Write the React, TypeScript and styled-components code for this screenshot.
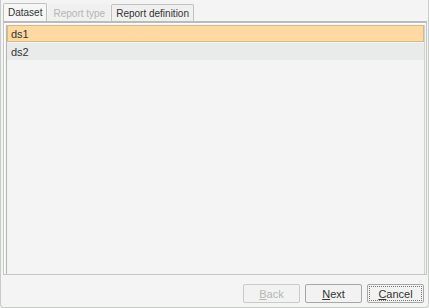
import styled, { createGlobalStyle } from "styled-components";

const GlobalStyle = createGlobalStyle`
  html, body {
    margin: 0;
    padding: 0;
    background: #f3f4f3;
  }
  body {
    font-family: "Liberation Sans", Arial, sans-serif;
    font-size: 10px;
    color: #333;
  }
`;

const Frame = styled.div`
  width: 429px;
  height: 308px;
  box-sizing: border-box;
  border: 1px solid #c9cbc9;
  border-top: none;
  border-radius: 0 0 4px 4px;
  background: #f3f4f3;
  display: flex;
  flex-direction: column;
  padding: 3px 1px 0 2px;
`;

const TabBar = styled.div`
  display: flex;
  align-items: flex-end;
  height: 18px;
`;

const Tab = styled.div<{ selected?: boolean; disabled?: boolean }>`
  box-sizing: border-box;
  height: ${({ selected }) => (selected ? "18px" : "17px")};
  padding: 0 4px;
  display: flex;
  align-items: center;
  border: 1px solid
    ${({ disabled }) => (disabled ? "transparent" : "#bfc2bf")};
  border-bottom: none;
  border-radius: 2px 2px 0 0;
  background: ${({ selected }) => (selected ? "#f6f7f6" : "#eff0ef")};
  color: ${({ disabled }) => (disabled ? "#b4b6b4" : "#333")};
  margin-right: 1px;
  white-space: nowrap;
`;

const Panel = styled.div`
  box-sizing: border-box;
  height: 254px;
  border: 1px solid #c3c6c3;
  border-top: 2px solid #b9bcb9;
  box-shadow: inset 1px 1px 0 #ffffff;
  padding: 2px 1px 0 2px;
  display: flex;
`;

const List = styled.div`
  flex: 1;
  border-left: 1px solid #b3b6b3;
  border-right: 1px solid #d0d2d0;
  display: flex;
  flex-direction: column;
`;

const Row = styled.div<{ selected?: boolean }>`
  box-sizing: border-box;
  height: 17px;
  padding-left: 3px;
  display: flex;
  align-items: center;
  font-size: 11px;
  color: #333;
  background: ${({ selected }) => (selected ? "#ffd9a2" : "#e9ebea")};
  border: 1px solid ${({ selected }) => (selected ? "#d8b988" : "transparent")};
  margin-bottom: ${({ selected }) => (selected ? "1px" : "0")};
`;

const Footer = styled.div`
  display: flex;
  justify-content: flex-end;
  gap: 5px;
  padding: 9px 3px 0 0;
`;

const Button = styled.button<{ focused?: boolean }>`
  box-sizing: border-box;
  width: 57px;
  height: 19px;
  padding: 0;
  border: 1px solid ${({ disabled }) => (disabled ? "#c9cbc9" : "#a5a8a5")};
  border-radius: 2px;
  background: #f1f2f1;
  font-family: "Liberation Sans", Arial, sans-serif;
  font-size: 11px;
  color: ${({ disabled }) => (disabled ? "#b5b7b5" : "#333")};
  display: flex;
  align-items: center;
  justify-content: center;
  outline: ${({ focused }) => (focused ? "1px dotted #777" : "none")};
  outline-offset: -3px;
`;

const Mnemonic = styled.span`
  text-decoration: underline;
  text-underline-offset: 1px;
`;

export default function App() {
  return (
    <>
      <GlobalStyle />
      <Frame>
        <TabBar>
          <Tab selected>Dataset</Tab>
          <Tab disabled>Report type</Tab>
          <Tab>Report definition</Tab>
        </TabBar>
        <Panel>
          <List>
            <Row selected>ds1</Row>
            <Row>ds2</Row>
          </List>
        </Panel>
        <Footer>
          <Button disabled>
            <Mnemonic>B</Mnemonic>ack
          </Button>
          <Button>
            <Mnemonic>N</Mnemonic>ext
          </Button>
          <Button focused>
            <Mnemonic>C</Mnemonic>ancel
          </Button>
        </Footer>
      </Frame>
    </>
  );
}
